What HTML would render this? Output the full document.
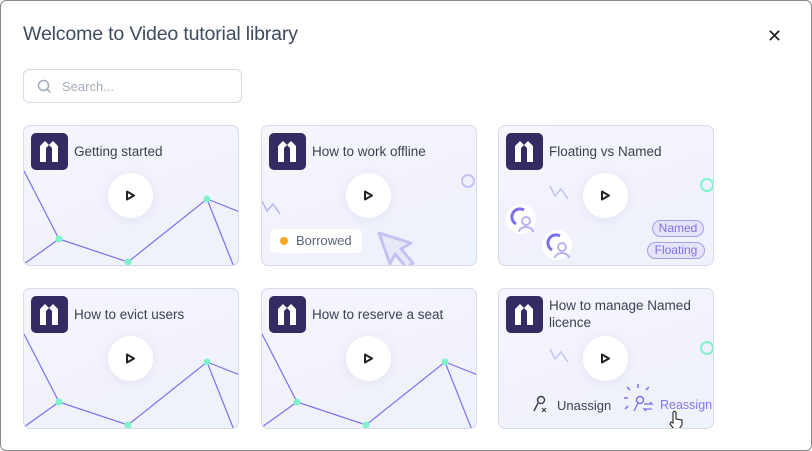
<!DOCTYPE html><html><head><style>
*{margin:0;padding:0;box-sizing:border-box}
body{width:812px;height:451px;background:#fff;font-family:"Liberation Sans",sans-serif;overflow:hidden;position:relative}
.frame{position:absolute;left:0;top:0;width:812px;height:451px;border:1px solid #8a8a8a;border-radius:6px}
h1{position:absolute;left:23px;top:23px;font-size:19.6px;font-weight:400;color:#3f4b5e;letter-spacing:-0.2px}
.x{position:absolute;left:767px;top:26px;font-size:18px;color:#222}
.search{position:absolute;left:23px;top:69px;width:219px;height:34px;border:1px solid #d3dbe6;border-radius:6px}
.search span{position:absolute;left:38px;top:9px;font-size:13px;color:#a4adb9}
.card{position:absolute;width:216px;height:141px;border:1px solid #d6dbe8;border-radius:7px;background:linear-gradient(160deg,#f6f5fd,#f1f2fb 60%,#eef3fb);overflow:hidden}
.logo{position:absolute;left:7px;top:7px;width:37px;height:37px;background:#352a62;border-radius:5px}
.t{position:absolute;left:50px;top:17px;font-size:13.5px;color:#3a4252;line-height:17px}
.play{position:absolute;left:84px;top:47px;width:45px;height:45px;border-radius:50%;background:#fff;box-shadow:0 2px 12px rgba(120,120,200,.12)}
.play svg{position:absolute;left:17px;top:17px}
svg.bg{position:absolute;left:0;top:0}
</style></head><body>
<div class="frame"></div>
<h1>Welcome to Video tutorial library</h1>
<div class="x">✕</div>
<div class="search"><svg style="position:absolute;left:13px;top:9px" width="15" height="15" viewBox="0 0 15 15"><circle cx="6.5" cy="6.5" r="5" fill="none" stroke="#a4adb9" stroke-width="1.5"/><path d="M10 10l3.5 3.5" stroke="#a4adb9" stroke-width="1.5"/></svg><span>Search...</span></div>

<div class="card" style="left:23px;top:125px">
<svg class="bg" width="216" height="141"><polyline points="0,45 35,113 104,136 183,73 216,86" fill="none" stroke="#7a6ff0" stroke-width="1.2"/><line x1="0" y1="138" x2="35" y2="113" stroke="#7a6ff0" stroke-width="1.2"/><line x1="183" y1="73" x2="210" y2="141" stroke="#7a6ff0" stroke-width="1.2"/><circle cx="35" cy="113" r="3.5" fill="#7ff3cc"/><circle cx="104" cy="136" r="3.5" fill="#7ff3cc"/><circle cx="183" cy="73" r="3.5" fill="#7ff3cc"/></svg>
<div class="logo"><svg width="37" height="37"><path d="M9 29V13l5-5 4 4 4-4 5 5v16h-6V15l-3-3-3 3v14z" fill="#fff"/></svg></div>
<div class="t">Getting started</div>
<div class="play"><svg width="11" height="11"><path d="M2 1.5l7 4-7 4z" fill="none" stroke="#222" stroke-width="2" stroke-linejoin="round"/></svg></div></div>

<div class="card" style="left:261px;top:125px">
<svg class="bg" width="216" height="141"><circle cx="206" cy="55" r="6" fill="none" stroke="#c7c2f3" stroke-width="2"/><polyline points="0,75 5,85 11,78 18,88" fill="none" stroke="#b9b5ee" stroke-width="1.5"/><path d="M117 107l32 10-10 6 12 14-6 5-12-14-5 10z" fill="#e7e9f7" stroke="#c5c1f3" stroke-width="3" stroke-linejoin="round"/></svg>
<div class="logo"><svg width="37" height="37"><path d="M9 29V13l5-5 4 4 4-4 5 5v16h-6V15l-3-3-3 3v14z" fill="#fff"/></svg></div>
<div class="t">How to work offline</div>
<div class="play"><svg width="11" height="11"><path d="M2 1.5l7 4-7 4z" fill="none" stroke="#222" stroke-width="2" stroke-linejoin="round"/></svg></div>
<div style="position:absolute;left:8px;top:103px;width:92px;height:24px;background:#fff;border-radius:6px;font-size:13px;color:#5b6678;padding:4px 0 0 26px">Borrowed<span style="position:absolute;left:10px;top:8px;width:8px;height:8px;border-radius:50%;background:#f5a623"></span></div></div>

<div class="card" style="left:498px;top:125px">
<svg class="bg" width="216" height="141"><circle cx="208" cy="59" r="6" fill="none" stroke="#7ff3cc" stroke-width="2"/><polyline points="51,60 56,70 62,63 69,73" fill="none" stroke="#c5c2f0" stroke-width="1.5"/>
<circle cx="22" cy="93" r="15" fill="#fff"/><path d="M25 84a7 7 0 1 0-8 14" fill="none" stroke="#7a6ff0" stroke-width="3"/><circle cx="27" cy="95" r="4" fill="none" stroke="#b8b2f3" stroke-width="2"/><path d="M20 106a7 5 0 0 1 14 0" fill="none" stroke="#b8b2f3" stroke-width="2"/>
<circle cx="58" cy="119" r="15" fill="#fff"/><path d="M61 110a7 7 0 1 0-8 14" fill="none" stroke="#7a6ff0" stroke-width="3"/><circle cx="63" cy="121" r="4" fill="none" stroke="#b8b2f3" stroke-width="2"/><path d="M56 132a7 5 0 0 1 14 0" fill="none" stroke="#b8b2f3" stroke-width="2"/></svg>
<div class="logo"><svg width="37" height="37"><path d="M9 29V13l5-5 4 4 4-4 5 5v16h-6V15l-3-3-3 3v14z" fill="#fff"/></svg></div>
<div class="t">Floating vs Named</div>
<div class="play"><svg width="11" height="11"><path d="M2 1.5l7 4-7 4z" fill="none" stroke="#222" stroke-width="2" stroke-linejoin="round"/></svg></div>
<div style="position:absolute;left:153px;top:94px;width:52px;height:17px;border:1.5px solid #a69ef0;border-radius:9px;background:#e6e3fb;font-size:12px;color:#7d72e8;text-align:center;line-height:14px">Named</div>
<div style="position:absolute;left:148px;top:116px;width:58px;height:17px;border:1.5px solid #a69ef0;border-radius:9px;background:#e6e3fb;font-size:12px;color:#7d72e8;text-align:center;line-height:14px">Floating</div></div>

<div class="card" style="left:23px;top:288px">
<svg class="bg" width="216" height="141"><polyline points="0,45 35,113 104,136 183,73 216,86" fill="none" stroke="#7a6ff0" stroke-width="1.2"/><line x1="0" y1="138" x2="35" y2="113" stroke="#7a6ff0" stroke-width="1.2"/><line x1="183" y1="73" x2="210" y2="141" stroke="#7a6ff0" stroke-width="1.2"/><circle cx="35" cy="113" r="3.5" fill="#7ff3cc"/><circle cx="104" cy="136" r="3.5" fill="#7ff3cc"/><circle cx="183" cy="73" r="3.5" fill="#7ff3cc"/></svg>
<div class="logo"><svg width="37" height="37"><path d="M9 29V13l5-5 4 4 4-4 5 5v16h-6V15l-3-3-3 3v14z" fill="#fff"/></svg></div>
<div class="t">How to evict users</div>
<div class="play"><svg width="11" height="11"><path d="M2 1.5l7 4-7 4z" fill="none" stroke="#222" stroke-width="2" stroke-linejoin="round"/></svg></div></div>

<div class="card" style="left:261px;top:288px">
<svg class="bg" width="216" height="141"><polyline points="0,45 35,113 104,136 183,73 216,86" fill="none" stroke="#7a6ff0" stroke-width="1.2"/><line x1="0" y1="138" x2="35" y2="113" stroke="#7a6ff0" stroke-width="1.2"/><line x1="183" y1="73" x2="210" y2="141" stroke="#7a6ff0" stroke-width="1.2"/><circle cx="35" cy="113" r="3.5" fill="#7ff3cc"/><circle cx="104" cy="136" r="3.5" fill="#7ff3cc"/><circle cx="183" cy="73" r="3.5" fill="#7ff3cc"/></svg>
<div class="logo"><svg width="37" height="37"><path d="M9 29V13l5-5 4 4 4-4 5 5v16h-6V15l-3-3-3 3v14z" fill="#fff"/></svg></div>
<div class="t">How to reserve a seat</div>
<div class="play"><svg width="11" height="11"><path d="M2 1.5l7 4-7 4z" fill="none" stroke="#222" stroke-width="2" stroke-linejoin="round"/></svg></div></div>

<div class="card" style="left:498px;top:288px">
<svg class="bg" width="216" height="141"><circle cx="208" cy="59" r="6" fill="none" stroke="#7ff3cc" stroke-width="2"/><polyline points="51,60 56,70 62,63 69,73" fill="none" stroke="#c5c2f0" stroke-width="1.5"/>
<circle cx="42" cy="111" r="3.5" fill="none" stroke="#3a4252" stroke-width="1.5"/><path d="M35 122l4-8" stroke="#3a4252" stroke-width="1.5"/><path d="M43 119l4 4m0-4l-4 4" stroke="#3a4252" stroke-width="1.2"/>
<path d="M139 95v4M150 98l-3 3M128 98l3 3M125 109h4M126 120l3-3" stroke="#7a6ff0" stroke-width="1.5"/>
<circle cx="141" cy="111" r="3.5" fill="none" stroke="#7a6ff0" stroke-width="1.5"/><path d="M135 122l4-8M145 115h8l-2-2M153 120h-8l2 2" fill="none" stroke="#7a6ff0" stroke-width="1.3"/></svg>
<div class="logo"><svg width="37" height="37"><path d="M9 29V13l5-5 4 4 4-4 5 5v16h-6V15l-3-3-3 3v14z" fill="#fff"/></svg></div>
<div class="t" style="top:8px;width:160px">How to manage Named licence</div>
<div class="play" style="top:47px"><svg width="11" height="11"><path d="M2 1.5l7 4-7 4z" fill="none" stroke="#222" stroke-width="2" stroke-linejoin="round"/></svg></div>
<div style="position:absolute;left:58px;top:109px;font-size:13px;color:#3a4252">Unassign</div>
<div style="position:absolute;left:161px;top:109px;font-size:12.5px;color:#8178ea">Reassign</div>
<svg class="bg" width="216" height="141"><path d="M174 134v-10a1.5 1.5 0 0 1 3 0v6l6 1v5l-3 4h-5l-4-5 1-2z" fill="#fff" stroke="#222" stroke-width="1.1"/></svg></div>
</body></html>
